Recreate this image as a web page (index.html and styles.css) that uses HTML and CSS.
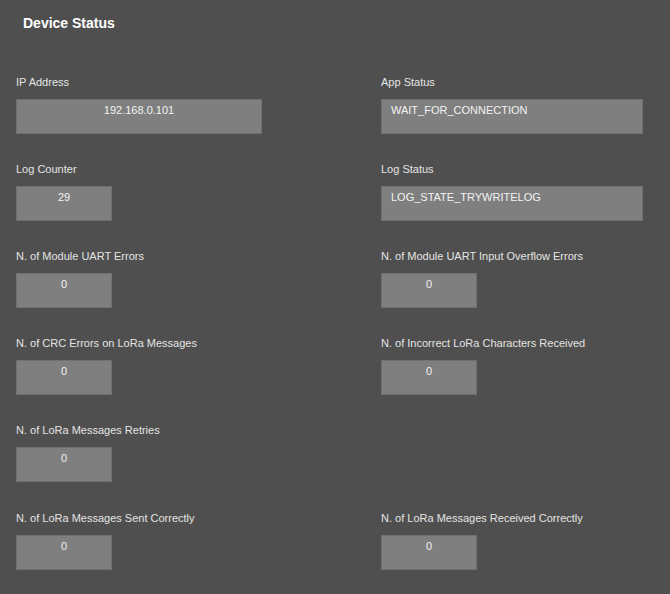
FILE: index.html
```html
<!DOCTYPE html>
<html lang="en">
<head>
  <meta charset="UTF-8" />
  <meta name="viewport" content="width=device-width, initial-scale=1.0" />
  <title>Device Status</title>
  <link rel="stylesheet" href="styles.css">
</head>
<body>
  <h2 class="title">Device Status</h2>

  <div class="status-grid">
    <!-- Row 1 -->
    <div class="field">
      <label>IP Address</label>
      <div class="value wide center">192.168.0.101</div>
    </div>
    <div class="field">
      <label>App Status</label>
      <div class="value wider">WAIT_FOR_CONNECTION</div>
    </div>

    <!-- Row 2 -->
    <div class="field">
      <label>Log Counter</label>
      <div class="value small center">29</div>
    </div>
    <div class="field">
      <label>Log Status</label>
      <div class="value wider">LOG_STATE_TRYWRITELOG</div>
    </div>

    <!-- Row 3 -->
    <div class="field">
      <label>N. of Module UART Errors</label>
      <div class="value small center">0</div>
    </div>
    <div class="field">
      <label>N. of Module UART Input Overflow Errors</label>
      <div class="value small center">0</div>
    </div>

    <!-- Row 4 -->
    <div class="field">
      <label>N. of CRC Errors on LoRa Messages</label>
      <div class="value small center">0</div>
    </div>
    <div class="field">
      <label>N. of Incorrect LoRa Characters Received</label>
      <div class="value small center">0</div>
    </div>

    <!-- Row 5 -->
    <div class="field">
      <label>N. of LoRa Messages Retries</label>
      <div class="value small center">0</div>
    </div>
    <div class="field"></div>

    <!-- Row 6 -->
    <div class="field last">
      <label>N. of LoRa Messages Sent Correctly</label>
      <div class="value small center">0</div>
    </div>
    <div class="field last">
      <label>N. of LoRa Messages Received Correctly</label>
      <div class="value small center">0</div>
    </div>
  </div>
</body>
</html>
```

FILE: styles.css
```css
body {
  margin: 0;
  padding: 0 16px;
  min-height: 100vh;
  background: #4f4f4f;
  font-family: "Liberation Sans", Arial, sans-serif;
  font-size: 11px;
  color: #e2e2e2;
}
.title {
  margin: 15px 0 0 7px;
  font-size: 14px;
  line-height: 16px;
  font-weight: bold;
  color: #fff;
}
.status-grid {
  display: grid;
  grid-template-columns: 365px 1fr;
  row-gap: 28px;
  margin-top: 44px;
}
.field label {
  display: block;
  line-height: 14px;
  margin-bottom: 10px;
  color: #e4e4e4;
}
.field.last { padding-top: 1px; }
.value {
  box-sizing: border-box;
  height: 35px;
  padding: 3px 9px 0;
  line-height: 14px;
  background: #7f7f7f;
  border: 1px solid #707070;
  color: #f2f2f2;
}
.value.center { text-align: center; }
.value.wide { width: 246px; }
.value.wider { width: 262px; }
.value.small { width: 96px; }
```
